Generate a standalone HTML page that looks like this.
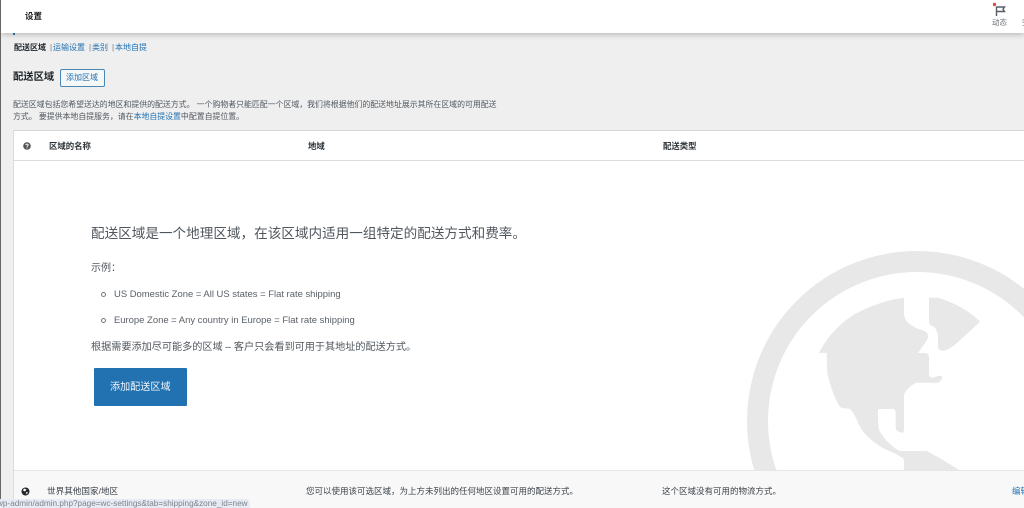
<!DOCTYPE html>
<html lang="zh">
<head>
<meta charset="utf-8">
<title>设置</title>
<style>
html,body{margin:0;padding:0;width:1024px;height:508px;overflow:hidden;background:#efefef;}
body{font-family:"Liberation Sans","Noto Sans CJK SC",sans-serif;color:#50575e;}
#w{position:absolute;left:0;top:0;width:1024px;height:508px;overflow:hidden;background:#efefef;filter:blur(.3px);}
#w div,#w a,#w span{position:absolute;white-space:nowrap;}
#w a{color:#2271b1;text-decoration:none;}
.t{line-height:14px;}
</style>
</head>
<body>
<div id="w">
<div style="left:0;top:0;width:1px;height:508px;background:#666;z-index:5"></div>
<div style="left:1px;top:0;width:1023px;height:33px;background:#fff;box-shadow:0 1px 6px rgba(0,0,0,.28);z-index:3"></div>
<div class="t" style="left:25px;top:9px;font-size:8.5px;font-weight:bold;color:#1e1e1e;z-index:4">设置</div>
<svg style="position:absolute;left:990px;top:1px;z-index:4" width="20" height="17" viewBox="0 0 20 17">
<path d="M6.5 5.5V15M6.5 6H14.5L13 8.2L14.5 10.5H6.5" fill="none" stroke="#555d66" stroke-width="1.4"/>
<circle cx="4.5" cy="3.5" r="1.7" fill="#d94f4f"/>
</svg>
<div class="t" style="left:992px;top:16px;font-size:7.5px;color:#6b7178;z-index:4">动态</div>
<div class="t" style="left:1022px;top:16px;font-size:7.5px;color:#6b7178;z-index:4">完</div>
<div style="left:13px;top:33px;width:2px;height:2px;background:#2271b1;z-index:4"></div>

<div class="t" style="left:14px;top:41px;font-size:8px;font-weight:bold;color:#1d2327">配送区域</div>
<div class="t" style="left:50px;top:41px;font-size:8px;color:#777">|</div>
<a class="t" style="left:53px;top:41px;font-size:8px">运输设置</a>
<div class="t" style="left:89px;top:41px;font-size:8px;color:#777">|</div>
<a class="t" style="left:92px;top:41px;font-size:8px">类别</a>
<div class="t" style="left:112px;top:41px;font-size:8px;color:#777">|</div>
<a class="t" style="left:115px;top:41px;font-size:8px">本地自提</a>

<div class="t" style="left:13px;top:71px;font-size:10.3px;font-weight:bold;color:#1d2327">配送区域</div>
<div style="left:60px;top:69px;width:43px;height:16px;border:1px solid #4a87b5;border-radius:2px;background:#f6f7f7;"></div>
<a class="t" style="left:66px;top:71px;font-size:8px">添加区域</a>

<div class="t" style="left:13px;top:98px;font-size:7.9px;">配送区域包括您希望送达的地区和提供的配送方式。 一个购物者只能匹配一个区域，我们将根据他们的配送地址展示其所在区域的可用配送</div>
<div class="t" style="left:13px;top:110px;font-size:7.9px;">方式。 要提供本地自提服务，请在<a style="position:static">本地自提设置</a>中配置自提位置。</div>

<div style="left:13px;top:130px;width:1011px;height:378px;background:#fff;border-top:1px solid #d5d5d5;border-left:1px solid #dcdcdc;box-sizing:border-box;overflow:hidden"></div>
<div style="left:14px;top:160px;width:1010px;height:1px;background:#dcdcdc"></div>
<svg style="position:absolute;left:23px;top:142px" width="8" height="8" viewBox="0 0 8 8"><circle cx="4" cy="4" r="3.8" fill="#555"/><path d="M2.8 3.1C2.9 1.8 5.2 1.8 5.2 3.1C5.2 3.9 4 3.9 4 4.9" fill="none" stroke="#fff" stroke-width=".9"/><rect x="3.5" y="5.5" width="1" height="1" fill="#fff"/></svg>
<div class="t" style="left:49px;top:139px;font-size:8.4px;font-weight:bold;color:#2c3338">区域的名称</div>
<div class="t" style="left:308px;top:139px;font-size:8.4px;font-weight:bold;color:#2c3338">地域</div>
<div class="t" style="left:663px;top:139px;font-size:8.4px;font-weight:bold;color:#2c3338">配送类型</div>

<svg style="position:absolute;left:700px;top:240px" width="324" height="230" viewBox="700 240 324 230">
<circle cx="917" cy="421" r="159.5" fill="none" stroke="#e8e8e8" stroke-width="21"/>
<path fill="#e8e8e8" d="M904 297.7C890 299 870 306 855 314C840 323 827 337 819 353L826.7 352.7L827.3 373C830 385 835 400 840 406.7C843 409 848 408 850 409C855 414 857 421 860 427C866 437 878 446 887 450C893 453 898 454 900 456.7C903 457 904 459 904 461.7V470H959C948 463 938 457 926.7 451H900C892 447 885 440 880 431.7C878 428 878 420 878 410C878 409 880 409 882 409H893C895 409 895.7 411 895.7 414V428C896 431 900 433 903 432.7C904 432 904 430 904 428V396C904 392 910 385 916.7 382.7H937C941 382 943 378 941.7 376C938 375 935 378 931 377.5C929.5 377 929 375 929 372V358C929 355 928 353 925 353H918L925 343C928 339 929 336 927 333C925 330 920 330 916 328C911 325 906 322 905 318C904 316 904 314 904 312Z"/>
<path fill="#e8e8e8" d="M929 297.7H938C952 302 969 310 980 321.7L957 343C951 348 946 351 942 350.7C939 350 938 349 938 346V335C937 331 935 326 932 326C930 326 929 323 929 320Z"/>
</svg>

<div class="t" style="left:91px;top:225px;font-size:13.6px;line-height:18px;color:#50575e">配送区域是一个地理区域，在该区域内适用一组特定的配送方式和费率。</div>
<div class="t" style="left:91px;top:262px;font-size:10px;">示例：</div>
<div style="left:101px;top:292px;width:3px;height:3px;border:1px solid #777;border-radius:50%"></div>
<div class="t" style="left:114px;top:288px;font-size:9.45px;color:#5a6168">US Domestic Zone = All US states = Flat rate shipping</div>
<div style="left:101px;top:318px;width:3px;height:3px;border:1px solid #777;border-radius:50%"></div>
<div class="t" style="left:114px;top:314px;font-size:9.45px;color:#5a6168">Europe Zone = Any country in Europe = Flat rate shipping</div>
<div class="t" style="left:91px;top:341px;font-size:10.15px;">根据需要添加尽可能多的区域 – 客户只会看到可用于其地址的配送方式。</div>
<div style="left:94px;top:368px;width:93px;height:38px;background:#2271b1;border-radius:1px;"></div>
<div class="t" style="left:110px;top:381px;font-size:10.1px;color:#f0f6fc">添加配送区域</div>

<div style="left:14px;top:470px;width:1010px;height:38px;background:#f8f8f8;border-top:1px solid #e6e6e6;box-sizing:border-box"></div>
<svg style="position:absolute;left:21px;top:487px" width="9" height="9" viewBox="0 0 9 9"><circle cx="4.5" cy="4.5" r="4" fill="#23282d"/><path d="M3 1.5L5.5 2.5L4 4.5L2 3.5ZM5 5L7 5.5L5.5 7.5Z" fill="#fff"/></svg>
<div class="t" style="left:47px;top:484px;font-size:8.6px;color:#3c434a">世界其他国家/地区</div>
<div class="t" style="left:306px;top:484px;font-size:8.5px;color:#3c434a">您可以使用该可选区域，为上方未列出的任何地区设置可用的配送方式。</div>
<div class="t" style="left:662px;top:484px;font-size:8.5px;color:#3c434a">这个区域没有可用的物流方式。</div>
<a class="t" style="left:1012px;top:484px;font-size:8.5px;">编辑</a>

<div style="left:0;top:499px;width:250px;height:9px;background:#e6ebf4;border-radius:0 4px 0 0;overflow:hidden;z-index:6">
<span style="left:-3px;top:1px;font-size:8.2px;line-height:8px;color:#7d838b;">wp-admin/admin.php?page=wc-settings&amp;tab=shipping&amp;zone_id=new</span>
</div>
</div>
</body>
</html>
